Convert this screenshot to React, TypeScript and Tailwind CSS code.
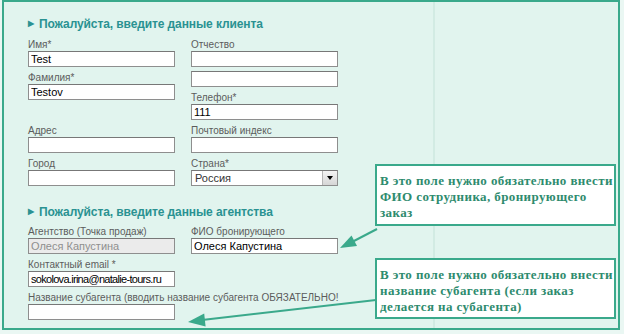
import React from 'react';

const labelCls = "block text-[10px] leading-[13px] h-[13px] text-[#5c5c5c] whitespace-nowrap";
const inputBase = "block w-[147px] h-[16px] border border-[#8e8e8e] border-t-[#777777] px-[2px] text-[11px] leading-[14px] outline-none";

const Field = ({ label, value = '', disabled = false, tight = false }: { label: string; value?: string; disabled?: boolean; tight?: boolean }) => (
  <div className="flex flex-col">
    <span className={labelCls}>{label}</span>
    <input
      readOnly
      value={value}
      className={`${inputBase} ${disabled ? 'bg-[#ebebeb] text-[#8f8f8f]' : 'bg-white text-black'} ${tight ? 'tracking-[-0.7px]' : ''}`}
    />
  </div>
);

const Heading = ({ children }: { children: React.ReactNode }) => (
  <h3 className="flex items-center h-[14px] text-[12px] font-bold text-[#2a9292] leading-[14px] tracking-[-0.1px]">
    <span className="text-[8px] mr-[5px]">&#9654;</span>
    {children}
  </h3>
);

const Callout = ({ lines, top, height }: { lines: string[]; top: string; height: string }) => (
  <div className={`absolute left-[375px] ${top} ${height} w-[241px] border-2 border-[#3aa98b] bg-white px-[3px] pt-[7px]`}>
    {lines.map(l => (
      <div key={l} className="text-[13px] leading-[16px] font-bold text-[#2e8b6e] tracking-[0.4px] whitespace-nowrap" style={{ fontFamily: '"Liberation Serif", serif' }}>
        {l}
      </div>
    ))}
  </div>
);

export default function App() {
  return (
    <div className="relative w-[624px] h-[334px] bg-[#eaf7f3] pl-[2px] pt-[0px]" style={{ fontFamily: '"Liberation Sans", Arial, sans-serif' }}>
      <div className="flex w-[618px] h-[330px] border-2 border-[#3aa98b] bg-[#e1f4ee]">
        {/* form column */}
        <div className="w-[429px] pl-[24px] pt-[15px]">
          <Heading>Пожалуйста, введите данные клиента</Heading>

          <div className="mt-[7px] flex gap-[16px]">
            <div className="flex flex-col gap-[4px]">
              <Field label="Имя*" value="Test" />
              <Field label="Фамилия*" value="Testov" />
            </div>
            <div className="flex flex-col">
              <Field label="Отчество" />
              <input readOnly value="" className={`${inputBase} bg-white mt-[4px]`} />
              <div className="mt-[4px]">
                <Field label="Телефон*" value="111" />
              </div>
            </div>
          </div>

          <div className="mt-[4px] grid grid-cols-[147px_147px] gap-x-[16px] gap-y-[4px]">
            <Field label="Адрес" />
            <Field label="Почтовый индекс" />
            <Field label="Город" />
            <div className="flex flex-col">
              <span className={labelCls}>Страна*</span>
              <div className="flex w-[147px] h-[16px] border border-[#8e8e8e] border-t-[#777777] bg-white">
                <span className="flex-1 px-[3px] text-[11px] leading-[14px] text-[#333333]">Россия</span>
                <span className="flex items-center justify-center w-[15px] h-[14px] border-l border-[#b5b5b5] bg-gradient-to-b from-[#f4f4f4] to-[#d6d6d6]">
                  <span className="w-0 h-0 border-l-[3px] border-r-[3px] border-t-[4px] border-l-transparent border-r-transparent border-t-black" />
                </span>
              </div>
            </div>
          </div>

          <div className="mt-[19px]">
            <Heading>Пожалуйста, введите данные агентства</Heading>
          </div>

          <div className="mt-[6px] grid grid-cols-[147px_147px] gap-x-[16px] gap-y-[4px]">
            <Field label="Агентство (Точка продаж)" value="Олеся Капустина" disabled />
            <Field label="ФИО бронирующего" value="Олеся Капустина" />
            <div className="col-span-2">
              <Field label="Контактный email *" value="sokolova.irina@natalie-tours.ru" tight />
            </div>
            <div className="col-span-2">
              <Field label="Название субагента (вводить название субагента ОБЯЗАТЕЛЬНО!" />
            </div>
          </div>
        </div>

        {/* faint right column */}
        <div className="flex-1 border-l-2 border-[#d2ebe3]" />
      </div>

      <Callout
        top="top-[164px]"
        height="h-[62px]"
        lines={['В это поле нужно обязательно внести', 'ФИО сотрудника, бронирующего', 'заказ']}
      />
      <Callout
        top="top-[258px]"
        height="h-[61px]"
        lines={['В это поле нужно обязательно внести', 'название субагента (если заказ', 'делается на субагента)']}
      />

      <svg className="absolute left-0 top-0 pointer-events-none" width="624" height="334" viewBox="0 0 624 334">
        <line x1="377" y1="229" x2="352" y2="242" stroke="#3aa98b" strokeWidth="2" />
        <polygon points="340,248 357,246 351.5,235.4" fill="#3aa98b" />
        <line x1="376" y1="300" x2="202" y2="320" stroke="#3aa98b" strokeWidth="2" />
        <polygon points="188,322 205.6,326.5 204.2,313.5" fill="#3aa98b" />
      </svg>
    </div>
  );
}
